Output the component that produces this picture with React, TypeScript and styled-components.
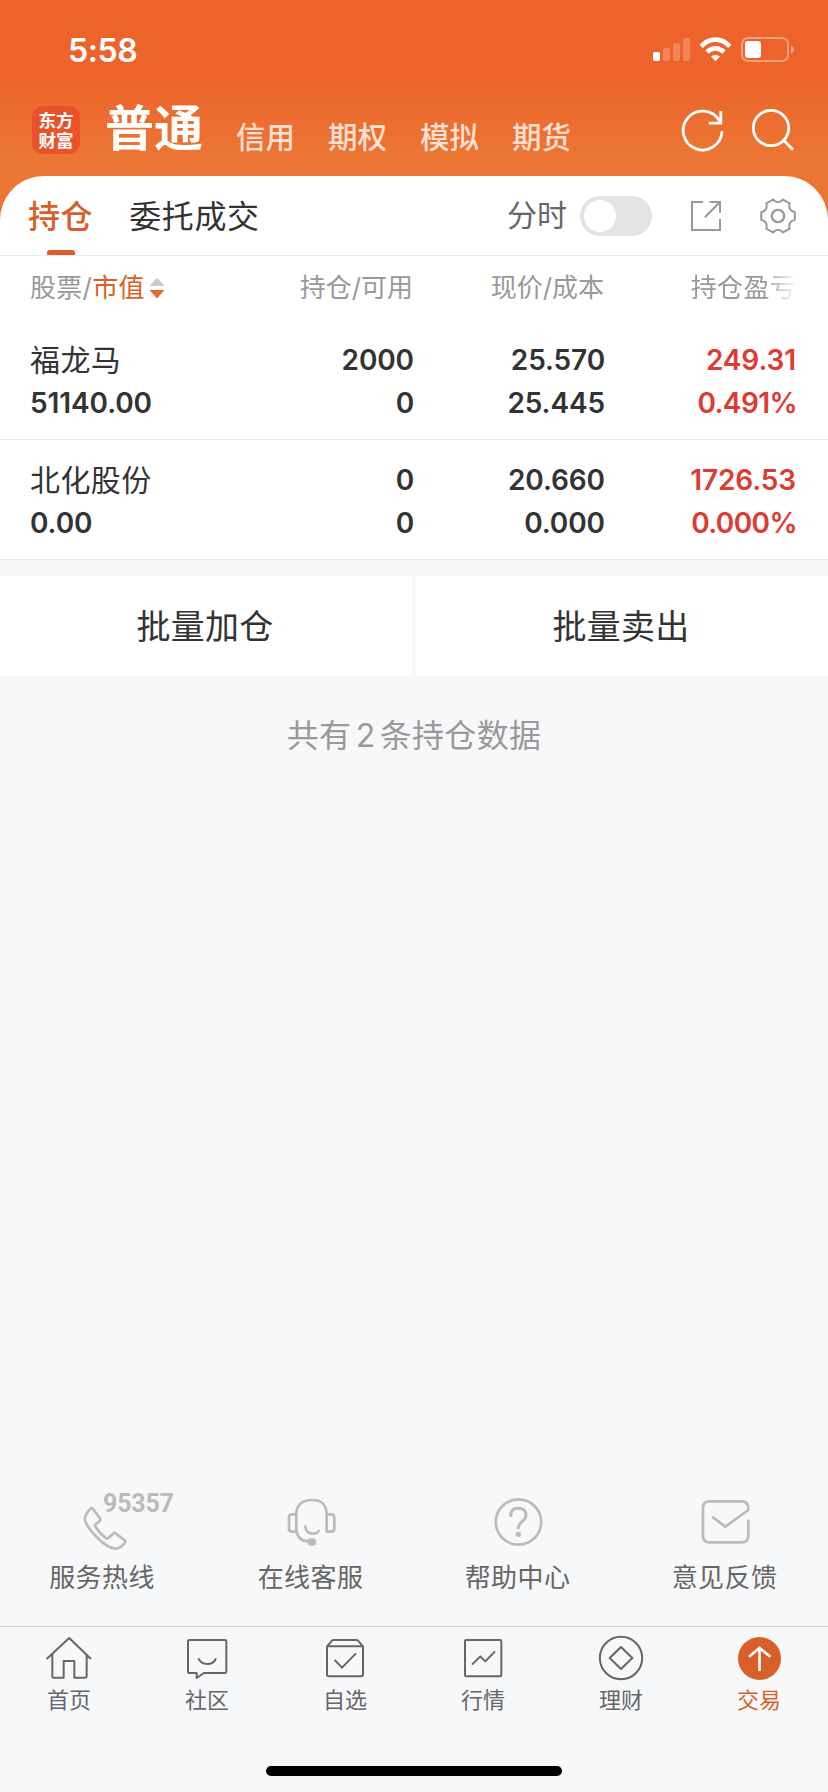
import React from 'react';
import styled, { createGlobalStyle } from 'styled-components';

const GlobalStyle = createGlobalStyle`
  * { box-sizing: border-box; }
  body {
    margin: 0;
    background: #f7f8fa;
    color: #333;
    font-family: Inter, "Noto Sans CJK SC", sans-serif;
  }
`;

const Screen = styled.div`
  width: 828px;
  height: 1792px;
  display: flex;
  flex-direction: column;
  overflow: hidden;
  background: #f7f8fa;
`;

const Header = styled.header`
  height: 226px;
  margin-bottom: -50px;
  flex: none;
  background: linear-gradient(#ec632b 0, #ec632b 74px, #ec7633 158px, #ec7633 100%);
  color: #fff;
`;

const StatusBar = styled.div`
  height: 88px;
  display: flex;
  justify-content: space-between;
  padding: 30px 33px 0 68px;
`;

const Clock = styled.span`
  margin-top: 1px;
  font-size: 32px;
  font-weight: 600;
  line-height: 40px;
  letter-spacing: -0.4px;
`;

const NavBar = styled.div`
  display: flex;
  height: 88px;
  padding: 0 32px;
`;

const Logo = styled.div`
  display: flex;
  flex-direction: column;
  align-items: center;
  width: 48px;
  height: 48px;
  margin: 18px 25px 0 0;
  padding-top: 4px;
  border-radius: 11px;
  background: #ea5329;
  font-family: "Noto Sans CJK SC", sans-serif;
  font-size: 17.5px;
  font-weight: 700;
  line-height: 20px;
`;

const LogoLine = styled.span`
  display: block;
  height: 20px;
`;

const NavTitle = styled.span`
  font-size: 49px;
  font-weight: 700;
  line-height: 60px;
  margin: 11px 32px 0 0;
  width: 99px;
  white-space: nowrap;
`;

const NavItem = styled.span`
  width: 92px;
  margin-top: 28px;
  font-size: 29.5px;
  font-weight: 500;
  line-height: 42px;
  color: rgba(255, 255, 255, 0.8);
`;

const NavIcons = styled.div`
  display: flex;
  gap: 24px;
  margin: 18px 0 0 auto;
`;

const Card = styled.section`
  flex: none;
  background: #fff;
  border-radius: 44px 44px 0 0;
  position: relative;
`;

const Tabs = styled.div`
  display: flex;
  height: 80px;
  padding: 0 32px 0 28px;
  border-bottom: 1px solid #ebebec;
`;

const Tab = styled.div<{ $active?: boolean }>`
  height: 79px;
  display: flex;
  flex-direction: column;
  align-items: center;
  justify-content: space-between;
  margin-right: 36px;
  padding-top: 17px;
  font-size: 32px;
  letter-spacing: 0.6px;
  line-height: 48px;
  font-weight: ${p => (p.$active ? 500 : 400)};
  color: ${p => (p.$active ? '#d95f28' : '#333')};
  &::after {
    content: '';
    width: 28px;
    height: 5px;
    border-radius: 3px 3px 0 0;
    background: ${p => (p.$active ? '#d95f28' : 'transparent')};
  }
`;

const Tools = styled.div`
  display: flex;
  align-items: center;
  margin-left: auto;
  height: 80px;
  font-size: 30px;
  color: #666;
`;

const ToolLabel = styled.span`
  line-height: 44px;
  padding-bottom: 2px;
`;

const Switch = styled.span`
  width: 72px;
  height: 40px;
  margin: 0 36px 0 13px;
  padding: 4px;
  border-radius: 20px;
  background: #e4e4e6;
  &::before {
    content: '';
    display: block;
    width: 32px;
    height: 32px;
    border-radius: 50%;
    background: #fff;
  }
`;

const ToolIcon = styled.svg`
  width: 36px;
  height: 36px;
  fill: none;
  stroke: #999;
  stroke-width: 2;
  & + & { margin-left: 36px; }
`;

const Row = styled.div`
  display: grid;
  grid-template-columns: 220px 164px 191px 191px;
  padding: 19px 0 0 30px;
  height: 120px;
  border-bottom: 1px solid #ebebec;
`;

const HeadRow = styled(Row)`
  height: 64px;
  padding-top: 12px;
  border: 0;
  font-size: 26px;
  line-height: 40px;
  color: #999;
`;

const HeadCell = styled.div<{ $right?: boolean; $fade?: boolean }>`
  display: flex;
  align-items: center;
  height: 40px;
  white-space: nowrap;
  letter-spacing: ${p => (p.$right && !p.$fade ? 0 : 0.3)}px;
  justify-content: ${p => (p.$right ? 'flex-end' : 'flex-start')};
  padding-right: ${p => (p.$fade ? 0 : 1)}px;
  mask-image: ${p => (p.$fade ? 'linear-gradient(90deg, #000 159px, transparent 193px)' : 'none')};
`;

const Sorted = styled.span`
  color: #d95f28;
`;

const SortIcon = styled.svg`
  width: 16px;
  height: 22px;
  margin-left: 4px;
`;

const Cell = styled.div<{ $right?: boolean; $up?: boolean }>`
  display: flex;
  flex-direction: column;
  align-items: ${p => (p.$right ? 'flex-end' : 'flex-start')};
  color: ${p => (p.$up ? '#dd3a32' : '#333')};
`;

const Value = styled.span<{ $rate?: boolean }>`
  font-size: 28px;
  font-weight: 600;
  line-height: 43px;
  height: 43px;
  letter-spacing: ${p => (p.$rate ? -0.6 : -0.1)}px;
  margin-right: ${p => (p.$rate ? -1 : 0)}px;
`;

const StockName = styled.span`
  font-size: 30px;
  letter-spacing: 0.4px;
  line-height: 43px;
  height: 43px;
`;

const Batch = styled.div`
  flex: none;
  display: grid;
  grid-template-columns: 1fr 1fr;
  gap: 4px;
  margin-top: 16px;
`;

const BatchButton = styled.button`
  height: 100px;
  border: 0;
  padding: 0 2px 4px 0;
  background: #fff;
  font: inherit;
  font-size: 34px;
  letter-spacing: 0.3px;
  color: #333;
`;

const Summary = styled.p`
  margin: 36px 0 0;
  text-align: center;
  font-size: 32px;
  line-height: 48px;
  letter-spacing: 0.3px;
  word-spacing: -5px;
  color: #999;
`;

const Services = styled.div`
  display: grid;
  grid-template-columns: repeat(4, 207px);
  margin-top: auto;
  height: 128px;
  flex: none;
`;

const Service = styled.div`
  display: flex;
  flex-direction: column;
  align-items: center;
  position: relative;
  font-size: 26px;
  letter-spacing: 0.4px;
  line-height: 40px;
  color: #666;
`;

const ServiceIcon = styled.svg`
  width: 48px;
  height: 48px;
  margin-bottom: 12px;
  overflow: visible;
  fill: none;
  stroke: #bbb;
  stroke-width: 8;
  stroke-linecap: round;
  stroke-linejoin: round;
`;

const ServiceLabel = styled.span<{ $nudge?: boolean }>`
  margin-right: ${p => (p.$nudge ? 3 : 0)}px;
`;

const Hotline = styled.span`
  position: absolute;
  left: 103px;
  top: -7px;
  font-family: Roboto, sans-serif;
  font-size: 25px;
  font-weight: 700;
  line-height: 26px;
  letter-spacing: -0.2px;
  color: #bbb;
`;

const TabBar = styled.nav`
  flex: none;
  height: 166px;
  border-top: 1px solid #d3d4d6;
  display: flex;
  flex-direction: column;
  align-items: center;
  justify-content: space-between;
  padding: 7px 0 16px;
`;

const TabRow = styled.div`
  display: grid;
  grid-template-columns: repeat(6, 138px);
`;

const TabItem = styled.div<{ $active?: boolean }>`
  display: flex;
  flex-direction: column;
  align-items: center;
  font-size: 22px;
  line-height: 34px;
  color: ${p => (p.$active ? '#d95f28' : '#666')};
`;

const TabIcon = styled.svg`
  width: 48px;
  height: 48px;
  margin-bottom: 1px;
  fill: none;
  stroke: #666;
  stroke-width: 6;
  stroke-linejoin: round;
`;

const HomeIndicator = styled.div`
  width: 296px;
  height: 10px;
  border-radius: 5px;
  background: #000;
`;

const StatusIcons = styled.svg`
  width: 142px;
  height: 28px;
  margin-top: 6px;
  fill: #fff;
`;

const polar = (r: number, deg: number) => {
  const a = (deg * Math.PI) / 180;
  return `${(18 + r * Math.cos(a)).toFixed(2)} ${(18 + r * Math.sin(a)).toFixed(2)}`;
};

const gearPath =
  `M${polar(17.2, -13)}` +
  [0, 60, 120, 180, 240, 300]
    .map(a => `L${polar(17.2, a + 13)}Q${polar(11.2, a + 30)} ${polar(17.2, a + 47)}`)
    .join('') +
  'Z';

const holdings = [
  { name: '福龙马', value: '51140.00', held: '2000', free: '0', price: '25.570', cost: '25.445', gain: '249.31', rate: '0.491%' },
  { name: '北化股份', value: '0.00', held: '0', free: '0', price: '20.660', cost: '0.000', gain: '1726.53', rate: '0.000%' },
];

const services = [
  {
    label: '服务热线',
    hotline: '95357',
    icon: <path d="M31 32 Q35 28 39 33 L60 61 Q63 65 59 69 L47 79 Q43 82 47 87 Q58 105 76 119 Q81 124 86 119 L99 107 Q103 103 107 106 L133 126 Q138 130 134 135 Q121 153 104 152 Q82 149 53 120 Q22 90 15 67 Q12 54 31 32Z" />,
  },
  {
    label: '在线客服',
    icon: (
      <>
        <path d="M28 101 H15 Q6 101 6 92 V58 Q6 49 15 49 H28 M119 49 H133 Q142 49 142 58 V92 Q142 101 133 101 H119 V44 Q115 6 78 6 H71 Q32 8 28 44 V95 Q31 130 67 131" />
        <path d="M55 86 Q58 107 78 107 Q91 107 95 99" />
        <rect x="65" y="125" width="19" height="14" rx="7" fill="#bbb" />
      </>
    ),
  },
  {
    label: '帮助中心',
    icon: (
      <>
        <circle cx="73.5" cy="72" r="68" />
        <path d="M50 57 V53 Q50 31 73.5 31 Q96 31 96 52 Q96 62 84 71 Q72 81 72 93" strokeLinecap="butt" strokeWidth="9" />
        <circle cx="73" cy="109" r="8" fill="#bbb" stroke="none" />
      </>
    ),
  },
  {
    label: '意见反馈',
    icon: <path d="M36 58 L73 86 L142 36 V31 Q142 10 122 10 H26 Q6 10 6 30 V114 Q6 133 26 133 H122 Q142 133 142 114 V68" />,
  },
];

const tabs = [
  {
    label: '首页',
    icon: <path d="M5 75 L72.5 12 L138 75 M22 60 V128 Q22 131 26 131 H56 V81 H88 V131 H121 Q125 131 125 127 V60" />,
  },
  {
    label: '社区',
    icon: (
      <path d="M20 18 H126 Q130 18 130 22 V113 Q130 117 126 117 H63 L41 132 V117 H20 Q15 117 15 113 V22 Q15 18 20 18Z M46 73 Q54 90 73 90 Q92 90 99 73" />
    ),
  },
  {
    label: '自选',
    icon: (
      <path d="M18 37 H126 M18 37 L33 20 Q35 18 38 18 H106 Q109 18 111 20 L126 37 V121 Q126 127 120 127 H24 Q18 127 18 121Z M41 78 L63 101 L105 58" />
    ),
  },
  {
    label: '行情',
    icon: (
      <>
        <rect x="18" y="18" width="109" height="109" rx="4" />
        <path d="M39 92 L64 67 L79 82 L108 52" />
      </>
    ),
  },
  {
    label: '理财',
    icon: (
      <>
        <circle cx="72" cy="72" r="63.5" />
        <path d="M72 39 L106 72 L72 105 L38 72Z" />
      </>
    ),
  },
  {
    label: '交易',
    active: true,
    icon: (
      <>
        <circle cx="73.5" cy="73.5" r="64.5" fill="#d95f28" stroke="none" />
        <path d="M73.5 111 V42 M42 68 L73.5 42 L106 68" stroke="#fff" strokeWidth="8" strokeLinejoin="miter" />
      </>
    ),
  },
];

export default function App() {
  return (
    <Screen>
      <GlobalStyle />
      <Header>
        <StatusBar>
          <Clock>5:58</Clock>
          <StatusIcons viewBox="653 36 142 28">
            <rect x="653" y="52" width="7" height="9" rx="1.8" />
            <g opacity="0.22">
              <rect x="663" y="48" width="7" height="13" rx="1.8" />
              <rect x="673" y="43" width="7" height="18" rx="1.8" />
              <rect x="683" y="38" width="7" height="23" rx="1.8" />
            </g>
            <g fill="none" stroke="#fff" strokeWidth="4.8">
              <path d="M701.2 46.3 Q707.5 39.7 715.5 39.7 Q723.5 39.7 729.8 46.3" />
              <path d="M707 52.1 Q710.7 48.3 715.5 48.3 Q720.3 48.3 724 52.1" />
            </g>
            <path d="M711 56.6 Q715.5 52.8 720 56.6 L715.5 61.2Z" />
            <rect x="742" y="38" width="46" height="23" rx="6" fill="none" stroke="#fff" strokeWidth="2" opacity="0.38" />
            <path d="M791 45.5 Q794 46.5 794 49.5 Q794 52.5 791 53.5Z" opacity="0.42" />
            <rect x="745" y="41" width="16" height="17" rx="3" />
          </StatusIcons>
        </StatusBar>
        <NavBar>
          <Logo>
            <LogoLine>东方</LogoLine>
            <LogoLine>财富</LogoLine>
          </Logo>
          <NavTitle>普通</NavTitle>
          {['信用', '期权', '模拟', '期货'].map(t => <NavItem key={t}>{t}</NavItem>)}
          <NavIcons>
            <svg width="46" height="48" viewBox="680 106 46 48" fill="none" stroke="#fff" strokeWidth="2.8">
              <path d="M722 131 A19.4 19.4 0 1 1 719.5 121" />
              <path d="M720.8 111 V123.2 H708.7" />
            </svg>
            <svg width="46" height="48" viewBox="750 106 46 48" fill="none" stroke="#fff" strokeWidth="2.8">
              <circle cx="771" cy="128" r="17.7" />
              <path d="M783.6 140.3 L793 149.7" />
            </svg>
          </NavIcons>
        </NavBar>
      </Header>
      <Card>
        <Tabs>
          <Tab $active>持仓</Tab>
          <Tab>委托成交</Tab>
          <Tools>
            <ToolLabel>分时</ToolLabel>
            <Switch />
            <ToolIcon viewBox="688 198 36 36">
              <path d="M703 202 H692 V230 H720 V219 M709.5 202 H720 V212.7 M704.8 217.3 L720 202" />
            </ToolIcon>
            <ToolIcon viewBox="0 0 36 36" strokeLinejoin="round">
              <path d={gearPath} />
              <circle cx="18" cy="18" r="6.2" strokeWidth="2.3" />
            </ToolIcon>
          </Tools>
        </Tabs>
        <HeadRow>
          <HeadCell>
            股票/<Sorted>市值</Sorted>
            <SortIcon viewBox="0 0 16 22">
              <path d="M0.5 9 L8 0.5 L15.5 9Z" fill="#ccc" />
              <path d="M0.5 13 L8 21.5 L15.5 13Z" fill="#e8692f" />
            </SortIcon>
          </HeadCell>
          <HeadCell $right>持仓/可用</HeadCell>
          <HeadCell $right>现价/成本</HeadCell>
          <HeadCell $right $fade>持仓盈亏</HeadCell>
        </HeadRow>
        {holdings.map(h => (
          <Row key={h.name}>
            <Cell><StockName>{h.name}</StockName><Value>{h.value}</Value></Cell>
            <Cell $right><Value>{h.held}</Value><Value>{h.free}</Value></Cell>
            <Cell $right><Value>{h.price}</Value><Value>{h.cost}</Value></Cell>
            <Cell $right $up><Value>{h.gain}</Value><Value $rate>{h.rate}</Value></Cell>
          </Row>
        ))}
      </Card>
      <Batch>
        <BatchButton>批量加仓</BatchButton>
        <BatchButton>批量卖出</BatchButton>
      </Batch>
      <Summary>共有 2 条持仓数据</Summary>
      <Services>
        {services.map(s => (
          <Service key={s.label}>
            <ServiceIcon viewBox="0 0 144 144">{s.icon}</ServiceIcon>
            {s.hotline && <Hotline>{s.hotline}</Hotline>}
            <ServiceLabel $nudge={!!s.hotline}>{s.label}</ServiceLabel>
          </Service>
        ))}
      </Services>
      <TabBar>
        <TabRow>
          {tabs.map(t => (
            <TabItem key={t.label} $active={t.active}>
              <TabIcon viewBox="0 0 144 144">{t.icon}</TabIcon>
              {t.label}
            </TabItem>
          ))}
        </TabRow>
        <HomeIndicator />
      </TabBar>
    </Screen>
  );
}
